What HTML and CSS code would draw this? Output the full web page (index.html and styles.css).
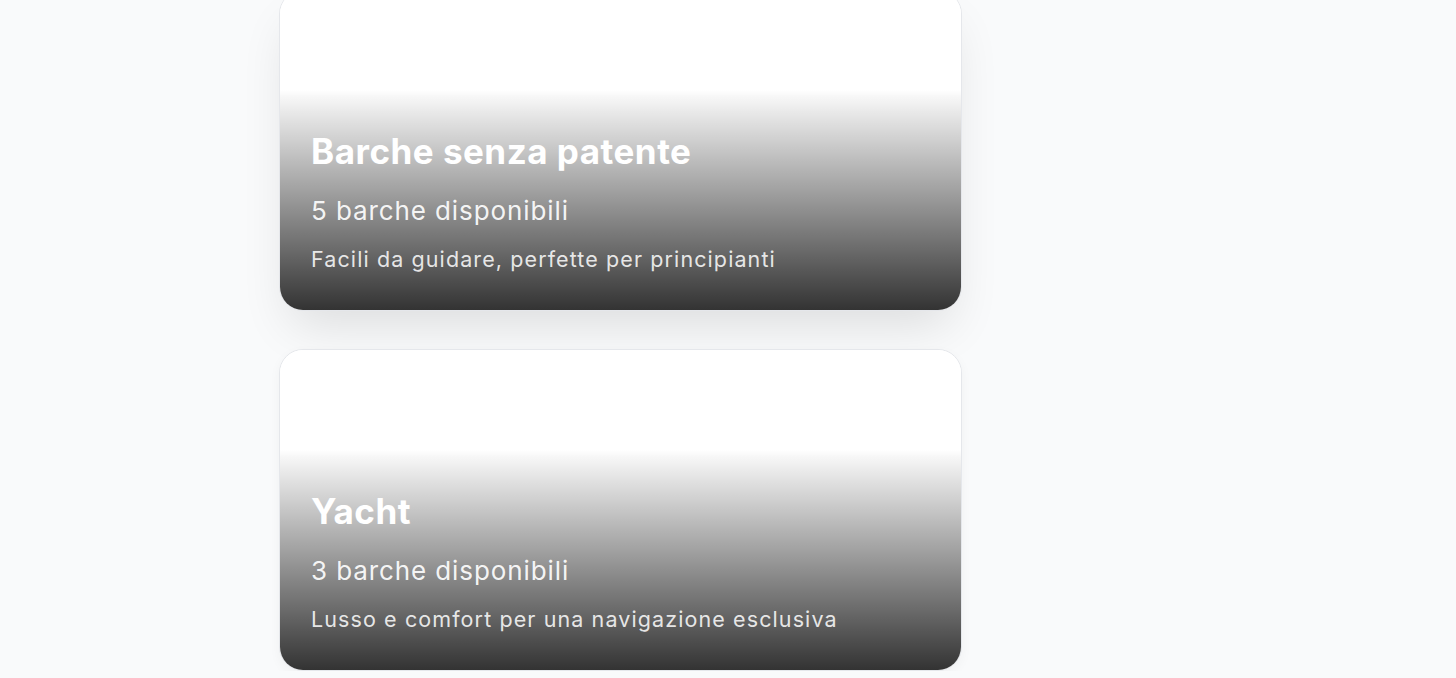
FILE: index.html
```html
<!DOCTYPE html>
<html lang="it">
<head>
<meta charset="utf-8">
<title>Categorie barche</title>
<link rel="stylesheet" href="styles.css">
</head>
<body>
<main class="page">
  <div class="list">
    <article class="card card-active">
      <div class="card-media"></div>
      <div class="card-overlay">
        <h3 class="card-title">Barche senza patente</h3>
        <p class="card-count">5 barche disponibili</p>
        <p class="card-desc">Facili da guidare, perfette per principianti</p>
      </div>
    </article>
    <article class="card">
      <div class="card-media"></div>
      <div class="card-overlay">
        <h3 class="card-title">Yacht</h3>
        <p class="card-count">3 barche disponibili</p>
        <p class="card-desc">Lusso e comfort per una navigazione esclusiva</p>
      </div>
    </article>
  </div>
</main>
</body>
</html>
```

FILE: styles.css
```css
* { box-sizing: border-box; }
html, body { margin: 0; padding: 0; }
body {
  background: #f9fafb;
  font-family: Inter, "Noto Sans", sans-serif;
  overflow: hidden;
}
.page {
  padding-left: 279px;
}
.list {
  width: 683px;
  margin-top: -10px;
  display: flex;
  flex-direction: column;
  gap: 38px;
}
.card {
  position: relative;
  height: 322px;
  border-radius: 24px;
  background: #ffffff;
  border: 1px solid #e5e7eb;
  overflow: hidden;
  box-shadow: 0 4px 12px rgba(0, 0, 0, 0.04);
}
.card-active {
  height: 321px;
  box-shadow: 0 25px 50px -12px rgba(0, 0, 0, 0.12);
}
.card-media {
  height: 100%;
  background: #ffffff;
}
.card-overlay {
  position: absolute;
  left: 0;
  right: 0;
  bottom: 0;
  height: 220px;
  padding: 0 31px 37px;
  display: flex;
  flex-direction: column;
  justify-content: flex-end;
  background: linear-gradient(to top, rgba(0, 0, 0, 0.8), rgba(0, 0, 0, 0.03) 97%, rgba(0, 0, 0, 0));
  color: #ffffff;
}
.card-title {
  margin: 0;
  font-size: 35px;
  font-weight: 700;
  line-height: 44px;
  letter-spacing: 0.5px;
}
.card-count {
  margin: 22px 0 0;
  font-size: 26px;
  line-height: 32px;
  letter-spacing: 0.9px;
  color: rgba(255, 255, 255, 0.92);
}
.card-desc {
  margin: 18px 0 0;
  font-size: 21.5px;
  line-height: 28px;
  letter-spacing: 1.1px;
  color: rgba(255, 255, 255, 0.86);
}
```
